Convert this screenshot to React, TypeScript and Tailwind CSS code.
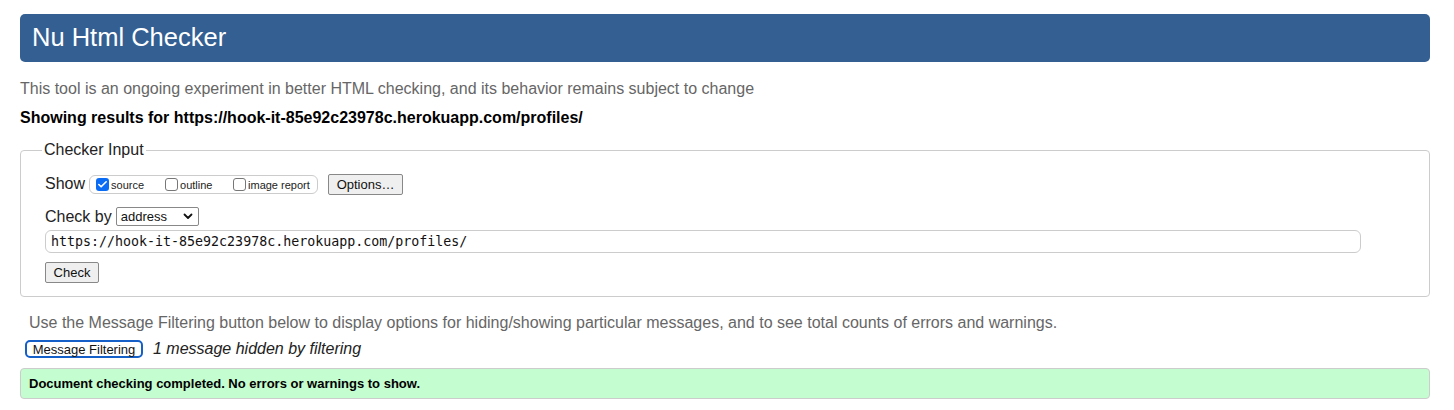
import { Check } from "lucide-react";

type BoxProps = { label: string; checked?: boolean };

function Box({ label, checked }: BoxProps) {
  return (
    <label className="flex items-center gap-[2px] text-[11px] text-[#222]">
      {checked ? (
        <span className="flex h-[13px] w-[13px] items-center justify-center rounded-[3px] bg-[#0a6cf5]">
          <Check className="h-[11px] w-[11px] text-white" strokeWidth={3.5} />
        </span>
      ) : (
        <span className="h-[13px] w-[13px] rounded-[3px] border border-[#777] bg-white" />
      )}
      <span className="mt-[3px]">{label}</span>
    </label>
  );
}

export default function App() {
  return (
    <div className="min-h-[410px] bg-white pl-5 pr-6 pt-[14px] font-['Liberation_Sans',Arial,sans-serif] text-black">
      <div className="flex h-[48px] items-center rounded-[5px] bg-[#335f93] pl-3">
        <h1 className="text-[25.5px] leading-none text-white">Nu Html Checker</h1>
      </div>

      <p className="mt-[18px] text-[16px] leading-[18px] text-[#666]">
        This tool is an ongoing experiment in better HTML checking, and its behavior remains subject to change
      </p>
      <p className="mt-[11px] text-[16px] font-bold leading-[18px]">
        Showing results for https://hook-it-85e92c23978c.herokuapp.com/profiles/
      </p>

      <fieldset className="mt-[14px] h-[156px] rounded-[4px] border border-[#ccc] px-6 pt-0">
        <legend className="ml-[-3px] px-[2px] text-[16px] leading-[18px] text-[#222]">Checker Input</legend>

        <div className="mt-[14px] flex h-[22px] items-center">
          <span className="text-[16px] text-[#222]">Show</span>
          <div className="ml-[4px] flex h-[19px] w-[229px] items-center gap-0 rounded-[6px] border border-[#ccc] pl-[6px]">
            <div className="w-[69px]">
              <Box label="source" checked />
            </div>
            <div className="w-[68px]">
              <Box label="outline" />
            </div>
            <Box label="image report" />
          </div>
          <button className="ml-[10px] h-[21px] w-[75px] rounded-[2px] border border-[#888] bg-[#efefef] text-[13px] text-[#111]">
            Options…
          </button>
        </div>

        <div className="mt-[12px] flex h-[19px] items-center">
          <span className="text-[16px] text-[#222]">Check by</span>
          <div className="ml-[4px] flex h-[19px] w-[83px] items-center justify-between rounded-[2px] border border-[#888] px-[4px]">
            <span className="text-[13px] text-[#111]">address</span>
            <svg width="10" height="7" viewBox="0 0 10 7" className="mr-[1px]">
              <path d="M1.5 1.5 L5 5 L8.5 1.5" fill="none" stroke="#111" strokeWidth="1.8" strokeLinecap="round" strokeLinejoin="round" />
            </svg>
          </div>
        </div>

        <div className="mt-[4px] flex h-[23px] w-[1316px] items-center rounded-[6px] border border-[#ccc] pl-[5px] font-['DejaVu_Sans_Mono',monospace] text-[13.3px] text-[#111]">
          https://hook-it-85e92c23978c.herokuapp.com/profiles/
        </div>

        <button className="mt-[9px] h-[21px] w-[54px] rounded-[2px] border border-[#888] bg-[#efefef] text-[13px] text-[#111]">
          Check
        </button>
      </fieldset>

      <p className="mt-[17px] pl-[9px] text-[16px] leading-[18px] text-[#666]">
        Use the Message Filtering button below to display options for hiding/showing particular messages, and to see total counts of errors and warnings.
      </p>

      <div className="mt-[5px] flex items-center pl-[5px]">
        <button className="h-[18px] w-[118px] rounded-[5px] border-2 border-[#1560c8] bg-white text-[13px] leading-none text-[#111]">
          Message Filtering
        </button>
        <span className="ml-[10px] text-[16px] italic text-[#222]">1 message hidden by filtering</span>
      </div>

      <div className="mt-[7px] flex h-[31px] items-center rounded-[4px] border border-[#ccc] bg-[#c4fdcf] pl-[8px] text-[13px] font-bold text-black">
        Document checking completed. No errors or warnings to show.
      </div>
    </div>
  );
}
